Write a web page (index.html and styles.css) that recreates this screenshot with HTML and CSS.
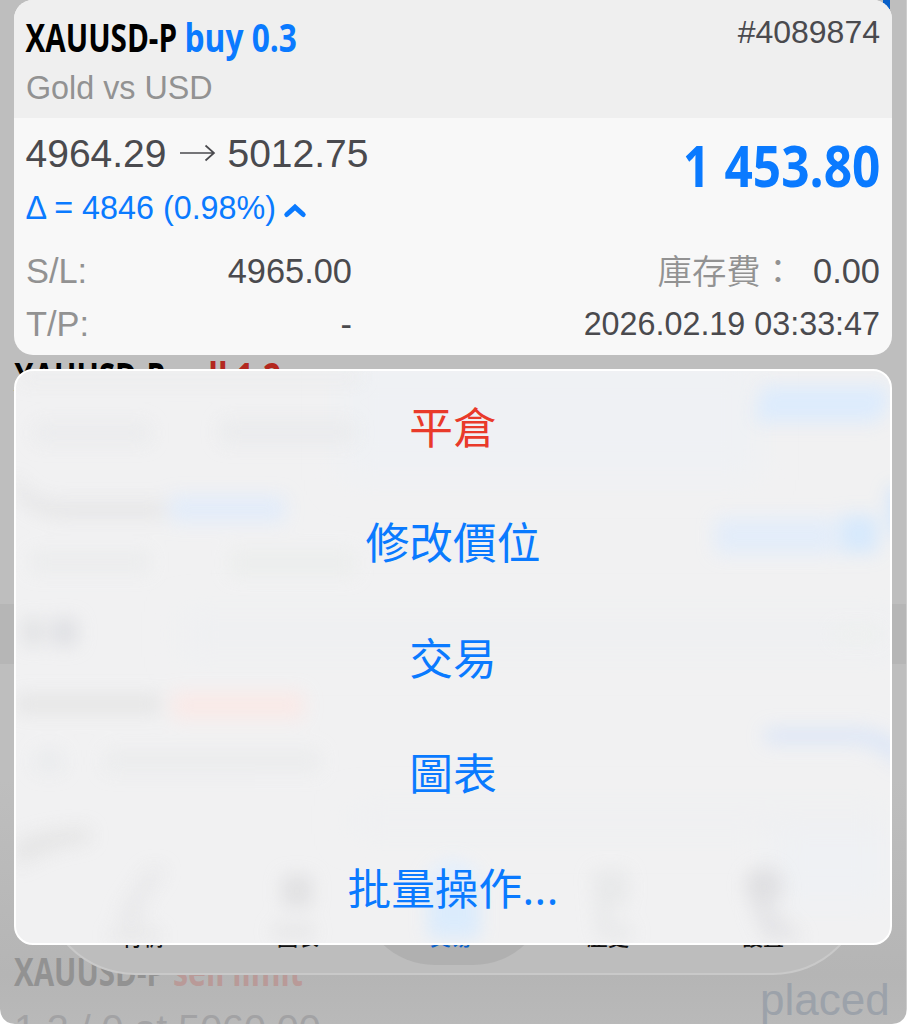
FILE: index.html
```html
<!DOCTYPE html>
<html lang="zh-Hant">
<head>
<meta charset="utf-8">
<title>XAUUSD-P</title>
<link rel="stylesheet" href="styles.css">
</head>
<body>
<main class="screen">
  <section class="layer backdrop">
    <svg class="scene" width="907" height="1024" viewBox="0 0 907 1024">
      <defs>
        <linearGradient id="floor" x1="0" y1="0" x2="0" y2="1">
          <stop offset="0" stop-color="#bebebe"/>
          <stop offset="0.8" stop-color="#b5b5b5"/>
          <stop offset="1" stop-color="#b9b9b9"/>
        </linearGradient>
      </defs>
      <rect x="0" y="780" width="907" height="244" fill="url(#floor)"/>
      <rect x="0" y="604" width="907" height="60" fill="#b6b6b6"/>
      <rect x="883" y="0" width="7" height="9" fill="#0960c8"/>
      <g class="narrow">
        <text x="14" y="391" font-size="39" textLength="151" lengthAdjust="spacingAndGlyphs" fill="#000">XAUUSD-P</text>
        <text x="174" y="391" font-size="39" textLength="107" lengthAdjust="spacingAndGlyphs" fill="#b3281f">sell 1.2</text>
        <text x="14" y="985.500" font-size="39" textLength="151" lengthAdjust="spacingAndGlyphs" fill="#929292">XAUUSD-P</text>
        <text x="173" y="985.500" font-size="39" textLength="130" lengthAdjust="spacingAndGlyphs" fill="#b99a98">sell limit</text>
      </g>
      <g class="plain">
        <text x="14" y="1041.500" font-size="39.4" fill="#a2a2a4">1.2 / 0 at 5060.00</text>
        <text x="760" y="1015" font-size="44" fill="#9ca2aa">placed</text>
      </g>
      <rect x="43" y="790" width="822" height="184" rx="92" fill="#bdbdbd" stroke="#c9c9c9" stroke-width="2"/>
      <rect x="359" y="808" width="190" height="157" rx="76" fill="#b0b0b0"/>
      <g class="tabs">
        <text x="143" y="944.5">行情</text>
        <text x="298" y="944.5">圖表</text>
        <text x="451" y="944.5" fill="#0960c8">交易</text>
        <text x="608" y="944.5">歷史</text>
        <text x="763" y="944.5">設置</text>
      </g>
      <path d="M906.5 0V1024" stroke="#cdcdcd"/>
      <path d="M0 1009Q1 1023 15 1024H0ZM907 1009Q906 1023 892 1024H907Z" fill="#fff"/>
    </svg>
  </section>

  <section class="layer front">
    <article class="card">
      <header class="head">
        <div class="title-row">
          <svg class="narrow" width="280" height="64">
            <text x="-0.500" y="52" font-size="39" textLength="151.500" lengthAdjust="spacingAndGlyphs" fill="#000">XAUUSD-P</text>
            <text x="158.500" y="52" font-size="39" textLength="112.500" lengthAdjust="spacingAndGlyphs" fill="#0a7aff">buy 0.3</text>
          </svg>
          <span class="ticket">#4089874</span>
        </div>
        <div class="name">Gold vs USD</div>
      </header>
      <div class="body">
        <div class="price-row">
          <div class="prices">
            <div class="quote">
              <span>4964.29</span>
              <svg class="arrow" width="36" height="18" viewBox="0 0 36 18"><path d="M0 9H34M25.500 1.500L34 9L25.500 16.500" fill="none" stroke="#4a4a4e" stroke-width="1.700"/></svg>
              <span>5012.75</span>
            </div>
            <div class="delta">
              <span>Δ = 4846 (0.98%)</span>
              <svg class="caret" width="22" height="15" viewBox="0 0 22 15"><path d="M2.800 11.500L11 4.200L19.200 11.500" fill="none" stroke="#0a7aff" stroke-width="5" stroke-linecap="round"/></svg>
            </div>
          </div>
          <svg class="narrow" width="198" height="110">
            <text y="68.500" font-size="57" fill="#0a7aff"><tspan x="1" textLength="27" lengthAdjust="spacingAndGlyphs">1</tspan> <tspan x="42.500" textLength="156" lengthAdjust="spacingAndGlyphs">453.80</tspan></text>
          </svg>
        </div>
        <div class="detail">
          <span class="label">S/L:</span><span class="value level">4965.00</span>
          <span class="label swap">庫存費：</span><span class="value last">0.00</span>
        </div>
        <div class="detail">
          <span class="label">T/P:</span><span class="value level">-</span>
          <span class="value time">2026.02.19 03:33:47</span>
        </div>
      </div>
    </article>

    <nav class="sheet">
      <svg class="haze" width="874" height="572" viewBox="16 371 874 572">
        <defs>
          <filter id="soft" x="-50%" y="-100%" width="200%" height="300%"><feGaussianBlur stdDeviation="9"/></filter>
          <filter id="wide" x="-50%" y="-100%" width="200%" height="300%"><feGaussianBlur stdDeviation="16"/></filter>
        </defs>
        <g filter="url(#wide)" fill="#eff1f4">
          <rect x="340" y="360" width="420" height="120"/>
          <rect x="180" y="612" width="720" height="45" fill="#eff0f2"/>
          <rect x="350" y="805" width="540" height="30" fill="#eff0f2"/>
          <rect x="770" y="835" width="120" height="70"/>
        </g>
        <g filter="url(#soft)" opacity="0.8">
          <rect x="20" y="372" width="340" height="10" fill="#e9eaeb"/>
          <rect x="35" y="423" width="115" height="20" fill="#e9eaec"/>
          <rect x="220" y="420" width="135" height="24" fill="#e9eaec"/>
          <path d="M762 386H888V408L876 422H754Z" fill="#d8eaff"/>
          <path d="M16 478Q34 502 60 502H165V518H60Q20 515 10 480Z" fill="#e3e3e4"/>
          <rect x="170" y="496" width="115" height="26" fill="#dfebfc"/>
          <rect x="30" y="552" width="120" height="20" fill="#eaebec"/>
          <rect x="230" y="550" width="125" height="26" fill="#ebedec"/>
          <rect x="715" y="518" width="120" height="36" fill="#e0ecfc"/>
          <rect x="840" y="515" width="38" height="38" fill="#d0e7ff"/>
          <path d="M888 488H910V535H892Z" fill="#c9e2ff"/>
          <rect x="22" y="618" width="20" height="28" fill="#dedfe1"/>
          <rect x="50" y="618" width="28" height="28" fill="#dcdde1"/>
          <rect x="16" y="694" width="145" height="20" fill="#e3e3e3"/>
          <rect x="172" y="692" width="132" height="27" fill="#fce8e5"/>
          <rect x="35" y="750" width="28" height="22" fill="#e8eaec"/>
          <rect x="105" y="750" width="215" height="22" fill="#eaebec"/>
          <path d="M765 728H860Q885 730 902 745V770Q880 746 855 744H765Z" fill="#d8e4f8"/>
          <path d="M16 842Q45 828 90 828V842Q50 846 16 868Z" fill="#e2e2e2"/>
          <rect x="835" y="628" width="45" height="12" fill="#edf0ed"/>
          <path d="M148 868H166L142 905V925H120V910Z" fill="#e6e6e8"/>
          <rect x="110" y="930" width="50" height="10" fill="#e2e2e3"/>
          <rect x="282" y="875" width="30" height="32" fill="#dddddf"/>
          <rect x="272" y="925" width="42" height="13" fill="#e2e2e3"/>
          <circle cx="453" cy="888" r="28" fill="#e1efff"/>
          <rect x="428" y="888" width="52" height="50" fill="#d6eaff"/>
          <path d="M592 870H628V905H612V925H632V940H598Z" fill="#e6e7e8"/>
          <circle cx="764" cy="886" r="19" fill="#dbdbde"/>
          <path d="M750 905H770L805 940H765Z" fill="#e1e1e4"/>
        </g>
      </svg>
      <a class="action danger">平倉</a>
      <a class="action">修改價位</a>
      <a class="action">交易</a>
      <a class="action">圖表</a>
      <a class="action">批量操作<span class="dots">...</span></a>
    </nav>
  </section>
</main>
</body>
</html>
```
FILE: styles.css
```css
* { box-sizing: border-box; }
body { margin: 0; background: #bebebe; font-family: "Liberation Sans", "Noto Sans CJK TC", sans-serif; }
svg { display: block; flex: none; overflow: visible; }
.screen { display: grid; width: 907px; height: 1024px; overflow: hidden; background: #bebebe; }
.layer { grid-area: 1 / 1; min-width: 0; }
.scene { overflow: hidden; }
.narrow { font-family: "Open Sans", sans-serif; font-weight: 700; }
.plain { font-family: "Liberation Sans", sans-serif; }
.tabs { font-family: "Noto Sans CJK TC", sans-serif; font-size: 21px; font-weight: 500; text-anchor: middle; fill: #111; }
.front { position: relative; padding: 0 15px 0 14px; display: flex; flex-direction: column; gap: 14px; }

.card { height: 355px; border-radius: 19px; overflow: hidden; background: #f8f8f8; color: #4a4a4e; }
.head { height: 117.5px; background: #efefef; padding: 0 12px; }
.title-row { display: flex; justify-content: space-between; height: 64px; }
.ticket { font-size: 32px; line-height: 64px; }
.name { font-size: 32.300px; line-height: 48px; color: #929292; }
.body { padding: 0 12px; }
.price-row { display: flex; justify-content: space-between; height: 126px; }
.prices { margin-left: -0.5px; }
.quote { display: flex; align-items: center; height: 71px; font-size: 39px; line-height: 71px; }
.arrow { margin: 0 11px 0 14px; }
.delta { display: flex; align-items: center; height: 38px; font-size: 32.300px; line-height: 38px; color: #0a7aff; }
.caret { margin: 6px 0 0 8px; }
.detail { display: flex; height: 53px; line-height: 54px; font-size: 34.400px; }
.label { width: 190px; color: #929292; }
.level { width: 136px; text-align: right; }
.swap { width: auto; margin-left: auto; font-family: "Noto Sans CJK TC DemiLight", "Noto Sans CJK TC", sans-serif; font-weight: 350; font-size: 34.400px; line-height: 50px; }
.last { margin-left: 18px; }
.time { margin-left: auto; font-size: 32.300px; }

.sheet { position: relative; height: 576px; border: 2px solid #fff; border-radius: 19px; background: #f1f1f2; overflow: hidden; display: grid; grid-template-rows: repeat(5, 115.300px); }
.haze { position: absolute; inset: 0; }
.action { position: relative; text-align: center; font-family: "Noto Sans CJK TC", sans-serif; font-size: 43.700px; line-height: 109px; color: #0a7aff; }
.danger { color: #e93a2a; }
.dots { font-family: "Open Sans", sans-serif; font-size: 46px; line-height: 1; }
```
